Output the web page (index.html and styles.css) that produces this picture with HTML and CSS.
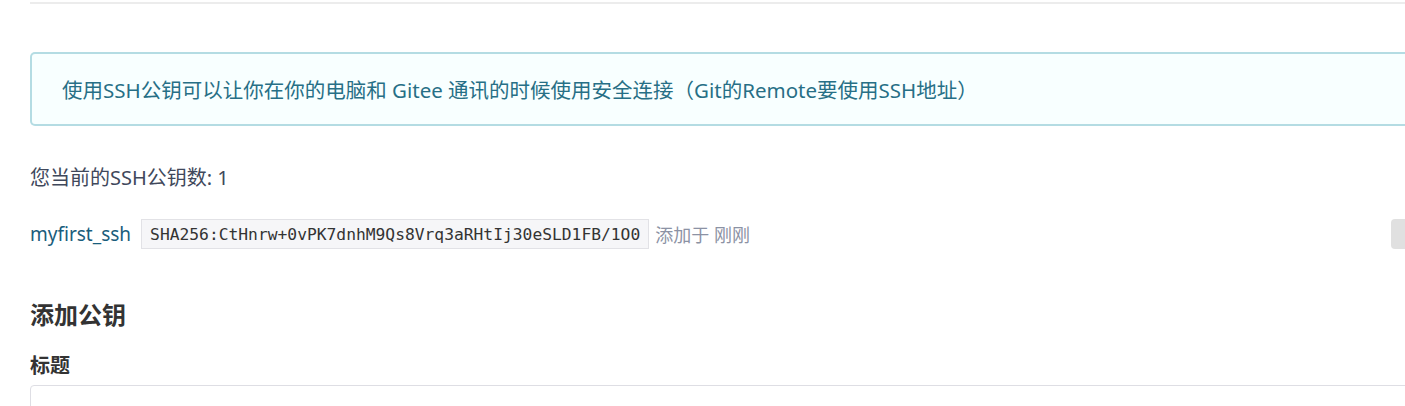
FILE: index.html
```html
<!DOCTYPE html>
<html lang="zh-CN">
<head>
<meta charset="utf-8">
<title>SSH公钥</title>
<link rel="stylesheet" href="styles.css">
</head>
<body>
<div class="page">
  <div class="top-rule"></div>
  <div class="info-message">使用SSH公钥可以让你在你的电脑和 Gitee 通讯的时候使用安全连接（Git的Remote要使用SSH地址）</div>
  <p class="count">您当前的SSH公钥数: 1</p>
  <div class="key-row">
    <a class="key-name">myfirst_ssh</a>
    <code class="fingerprint">SHA256:CtHnrw+0vPK7dnhM9Qs8Vrq3aRHtIj30eSLD1FB/1O0</code>
    <span class="key-time">添加于 刚刚</span>
    <span class="key-action"></span>
  </div>
  <h3 class="section-title">添加公钥</h3>
  <label class="field-label">标题</label>
  <div class="input">公钥标题</div>
</div>
</body>
</html>
```
FILE: styles.css
```css
html, body {
  margin: 0;
  padding: 0;
  background: #ffffff;
  overflow: hidden;
}
body {
  width: 1405px;
  height: 406px;
  font-family: "Noto Sans", "Noto Sans CJK SC", sans-serif;
  color: #40485b;
}
.page {
  margin-left: 30px;
  width: 1420px;
  display: flex;
  flex-direction: column;
  align-items: flex-start;
}
.top-rule {
  align-self: stretch;
  height: 2px;
  border-bottom: 2px solid #ececec;
  margin-bottom: 48px;
}
.info-message {
  align-self: stretch;
  box-sizing: border-box;
  height: 74px;
  display: flex;
  align-items: center;
  padding: 0 32px;
  background: #f8ffff;
  color: #276f86;
  box-shadow: inset 0 0 0 2px #b4dce3;
  border-radius: 5px;
  font-size: 20.5px;
}
.count {
  margin: 37px 0 0;
  font-size: 20px;
  line-height: 30px;
  color: #40485b;
}
.key-row {
  align-self: stretch;
  margin-top: 26px;
  height: 30px;
  display: flex;
  align-items: center;
}
.key-name {
  color: #1a5d7c;
  font-size: 19px;
  margin-right: 10px;
}
.fingerprint {
  box-sizing: border-box;
  height: 30px;
  display: flex;
  align-items: center;
  padding: 0 8px;
  background: #f6f6f8;
  border: 1px solid #e2e2e6;
  font-family: "DejaVu Sans Mono", monospace;
  font-size: 16.3px;
  color: #333;
  margin-right: 6px;
}
.key-time {
  color: #8c92a4;
  font-size: 18px;
}
.key-action {
  margin-left: auto;
  margin-right: 29px;
  width: 30px;
  height: 30px;
  background: #e0e0e0;
  border-radius: 4px;
}
.section-title {
  margin: 51px 0 0;
  font-size: 24px;
  font-weight: 700;
  line-height: 30px;
  color: #333;
}
.field-label {
  margin-top: 23px;
  font-size: 20px;
  font-weight: 700;
  line-height: 26px;
  color: #333;
}
.input {
  align-self: stretch;
  box-sizing: border-box;
  margin-top: 6px;
  height: 44px;
  border: 1px solid #dedee4;
  border-radius: 4px;
  padding: 17px 45px 0;
  font-size: 18px;
  color: #c4c7cf;
}
```
